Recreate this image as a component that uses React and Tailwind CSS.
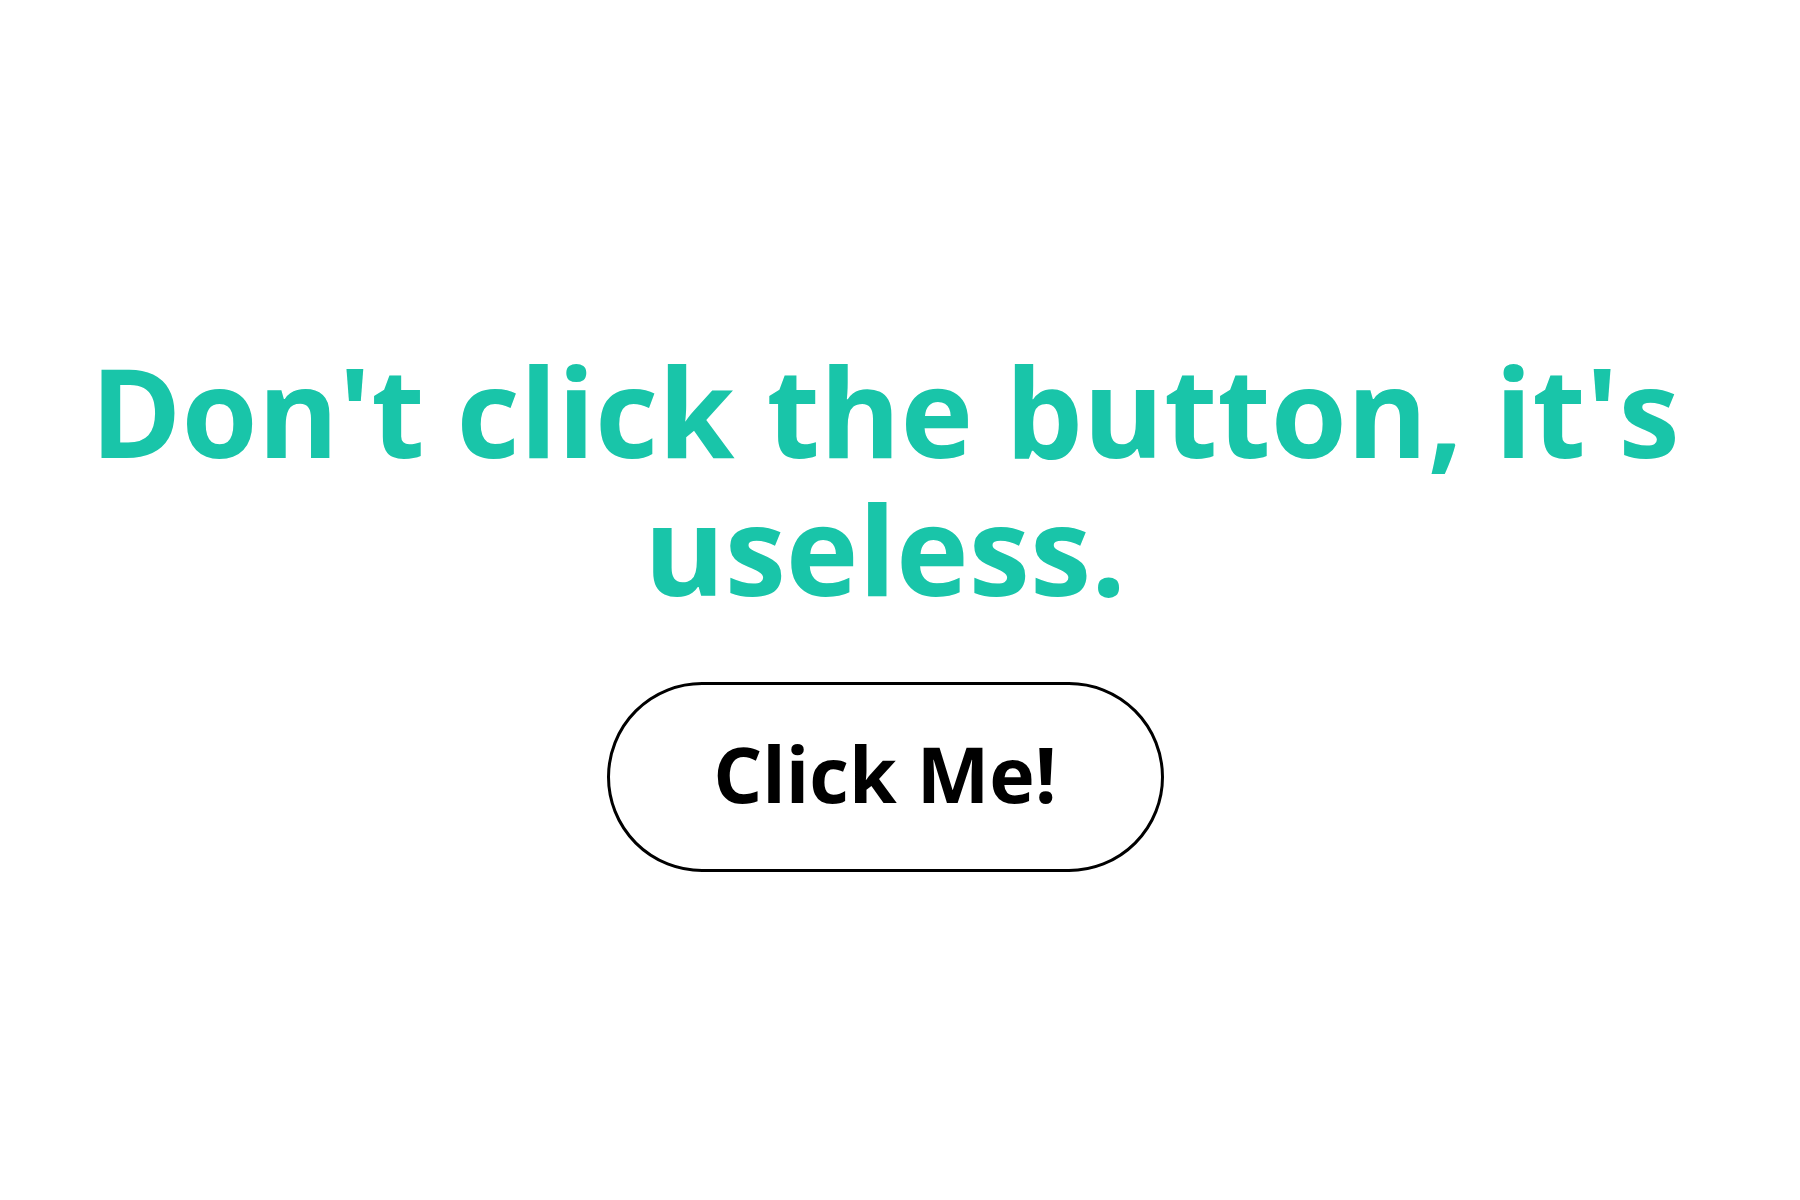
export default function App() {
  return (
    <div className="min-h-screen w-full bg-white" style={{ fontFamily: '"Open Sans", "Noto Sans", sans-serif' }}>
      <div className="w-[1770px] pt-[342px] flex flex-col items-center">
        <h1 className="w-full text-center text-[123px] leading-[138px] font-bold text-[#19c5a9]">
          <span className="block whitespace-nowrap">Don't click the button, it's</span>
          <span className="block">useless.</span>
        </h1>
        <button className="mt-[64px] w-[557px] h-[190px] pb-[8px] rounded-full border-[3px] border-black bg-white flex items-center justify-center text-[77px] font-bold text-black leading-none">
          Click Me!
        </button>
      </div>
    </div>
  );
}
